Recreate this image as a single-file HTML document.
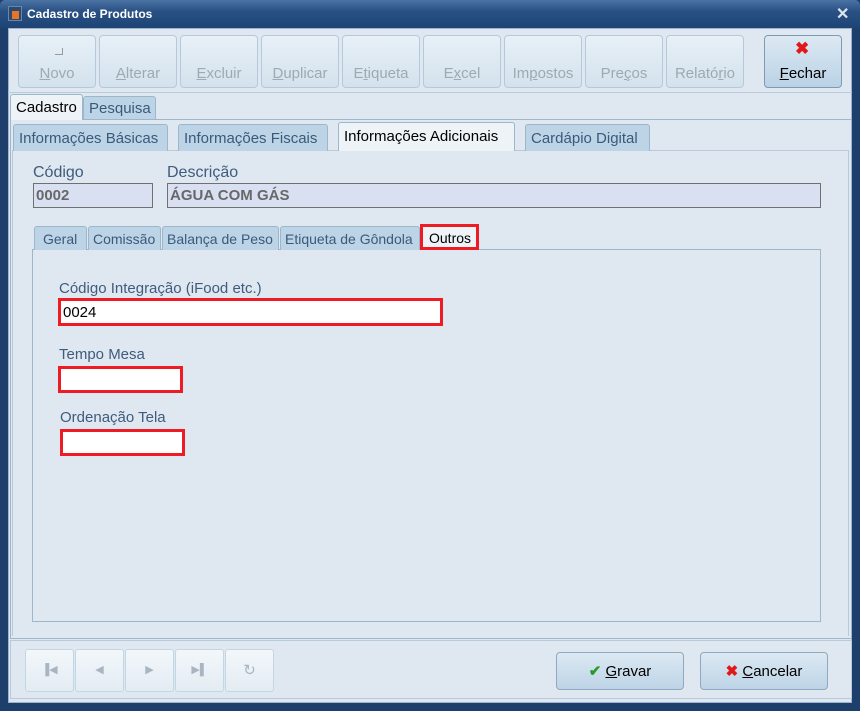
<!DOCTYPE html>
<html><head><meta charset="utf-8"><style>
*{box-sizing:border-box;margin:0;padding:0}
body{width:860px;height:711px;overflow:hidden;background:#1e3f6c;font-family:"Liberation Sans",sans-serif;font-size:15px;position:relative}
.a{position:absolute}
.title{left:0;top:0;width:860px;height:28px;background:linear-gradient(#4a72a3,#2a5184 40%,#1d4475);border-radius:5px 5px 0 0}
.win{left:8px;top:28px;width:844px;height:675px;background:#dfe8f1;border:1px solid #9fb4cc}
.tb{top:35px;height:53px;width:78px;border:1px solid #b4cadb;border-radius:4px;background:linear-gradient(#e8f0f7,#d3e2ed);color:#a0a8b0;text-align:center;padding-top:29px;font-size:15px}
.tab{height:24px;border:1px solid #9cb6cc;border-bottom:none;border-radius:3px 3px 0 0;background:#bcd4e5;color:#3a5a7c;padding:4px 4px 0;white-space:nowrap;overflow:hidden}
.act{background:#eef3f8;color:#000}
.lbl{color:#3f5b7d;font-size:15px}
.box{border:1px solid #707070;background:#d9e0f2;color:#686868;font-weight:bold;padding:3px 2px;font-size:15px}
.red{border:3px solid #ed1c24;background:#fff}
.nb{top:649px;width:49px;height:43px;border:1px solid #c2d6e4;border-radius:3px;background:linear-gradient(#f3f7fa,#e3ecf3);color:#a9b6c2;text-align:center;line-height:41px;font-size:11px}
.bb{top:652px;width:128px;height:38px;border:1px solid #8fa9c0;border-radius:4px;background:linear-gradient(#dce9f3,#bdd4e6);text-align:center;line-height:38px;color:#000;font-size:15px}
</style></head><body>
<div class="a title"></div>
<div class="a" style="left:8px;top:6px;width:14px;height:15px;background:#2b4a6e;border:1px solid #6b87a8"><div class="a" style="left:3px;top:4px;width:7px;height:8px;background:#e8742a"></div></div>
<div class="a" style="left:27px;top:7px;color:#fff;font-weight:bold;font-size:12px">Cadastro de Produtos</div>
<div class="a" style="left:836px;top:4px;color:#dce6f0;font-weight:bold;font-size:16px">✕</div>
<div class="a win"></div>
<div class="a" style="left:8px;top:92px;width:844px;height:1px;background:#b8cadb"></div>

<div class="a tb" style="left:18px"><div class="a" style="left:36px;top:12px;width:8px;height:7px;border-right:1px solid #999;border-bottom:1px solid #999"></div><u>N</u>ovo</div>
<div class="a tb" style="left:99px"><u>A</u>lterar</div>
<div class="a tb" style="left:180px"><u>E</u>xcluir</div>
<div class="a tb" style="left:261px"><u>D</u>uplicar</div>
<div class="a tb" style="left:342px">E<u>t</u>iqueta</div>
<div class="a tb" style="left:423px">E<u>x</u>cel</div>
<div class="a tb" style="left:504px">Im<u>p</u>ostos</div>
<div class="a tb" style="left:585px">Pre<u>ç</u>os</div>
<div class="a tb" style="left:666px">Relató<u>r</u>io</div>
<div class="a tb" style="left:764px;border-color:#7f9ab3;background:linear-gradient(#dce9f3,#bad2e5);color:#000"><div class="a" style="left:30px;top:3px;color:#e01818;font-weight:bold;font-size:17px">✖</div><u>F</u>echar</div>

<div class="a" style="left:10px;top:119px;width:842px;height:520px;border:1px solid #9cb6cc;background:#dfe8f1"></div>
<div class="a tab act" style="left:10px;top:94px;width:73px;height:26px;font-size:15px;padding-left:5px">Cadastro</div>
<div class="a tab" style="left:83px;top:96px;width:73px;height:23px;font-size:15px;padding-top:3px;padding-left:5px">Pesquisa</div>

<div class="a" style="left:12px;top:150px;width:837px;height:486px;border:1px solid #b7cadb;border-bottom:none"></div>
<div class="a tab" style="left:13px;top:124px;width:155px;height:27px;font-size:15px;padding-top:5px;padding-left:5px">Informações Básicas</div>
<div class="a tab" style="left:178px;top:124px;width:150px;height:27px;font-size:15px;padding-top:5px;padding-left:5px">Informações Fiscais</div>
<div class="a tab act" style="left:338px;top:122px;width:177px;height:29px;font-size:15px;padding-top:5px;padding-left:5px">Informações Adicionais</div>
<div class="a tab" style="left:525px;top:124px;width:125px;height:27px;font-size:15px;padding-top:5px;padding-left:5px">Cardápio Digital</div>

<div class="a lbl" style="left:33px;top:164px;font-size:16px">Código</div>
<div class="a lbl" style="left:167px;top:164px;font-size:16px">Descrição</div>
<div class="a box" style="left:33px;top:183px;width:120px;height:25px">0002</div>
<div class="a box" style="left:167px;top:183px;width:654px;height:25px">ÁGUA COM GÁS</div>

<div class="a" style="left:32px;top:249px;width:789px;height:373px;border:1px solid #9cb6cc"></div>
<div class="a tab" style="left:34px;top:226px;width:53px;font-size:14px;padding-left:8px">Geral</div>
<div class="a tab" style="left:88px;top:226px;width:73px;font-size:14px;padding-left:4px">Comissão</div>
<div class="a tab" style="left:162px;top:226px;width:117px;font-size:14px">Balança de Peso</div>
<div class="a tab" style="left:280px;top:226px;width:140px;font-size:14px">Etiqueta de Gôndola</div>
<div class="a tab act" style="left:420px;top:224px;width:59px;height:26px;border:3px solid #ed1c24;border-radius:0;padding:3px 0 0 6px;font-size:14px">Outros</div>

<div class="a lbl" style="left:59px;top:280px;font-size:15px">Código Integração (iFood etc.)</div>
<div class="a red" style="left:58px;top:298px;width:385px;height:28px;padding:3px 0 0 2px;font-size:15px">0024</div>
<div class="a lbl" style="left:59px;top:346px">Tempo Mesa</div>
<div class="a red" style="left:58px;top:366px;width:125px;height:27px"></div>
<div class="a lbl" style="left:60px;top:409px">Ordenação Tela</div>
<div class="a red" style="left:60px;top:429px;width:125px;height:27px"></div>

<div class="a" style="left:10px;top:640px;width:842px;height:59px;border:1px solid #b7cadb"></div>
<div class="a nb" style="left:25px">▐◀</div>
<div class="a nb" style="left:75px">◀</div>
<div class="a nb" style="left:125px">▶</div>
<div class="a nb" style="left:175px">▶▌</div>
<div class="a nb" style="left:225px;font-size:15px">↻</div>
<div class="a bb" style="left:556px"><span style="color:#2a9a2a;font-weight:bold">✔</span> <u>G</u>ravar</div>
<div class="a bb" style="left:700px"><span style="color:#e01818;font-weight:bold">✖</span> <u>C</u>ancelar</div>
</body></html>
